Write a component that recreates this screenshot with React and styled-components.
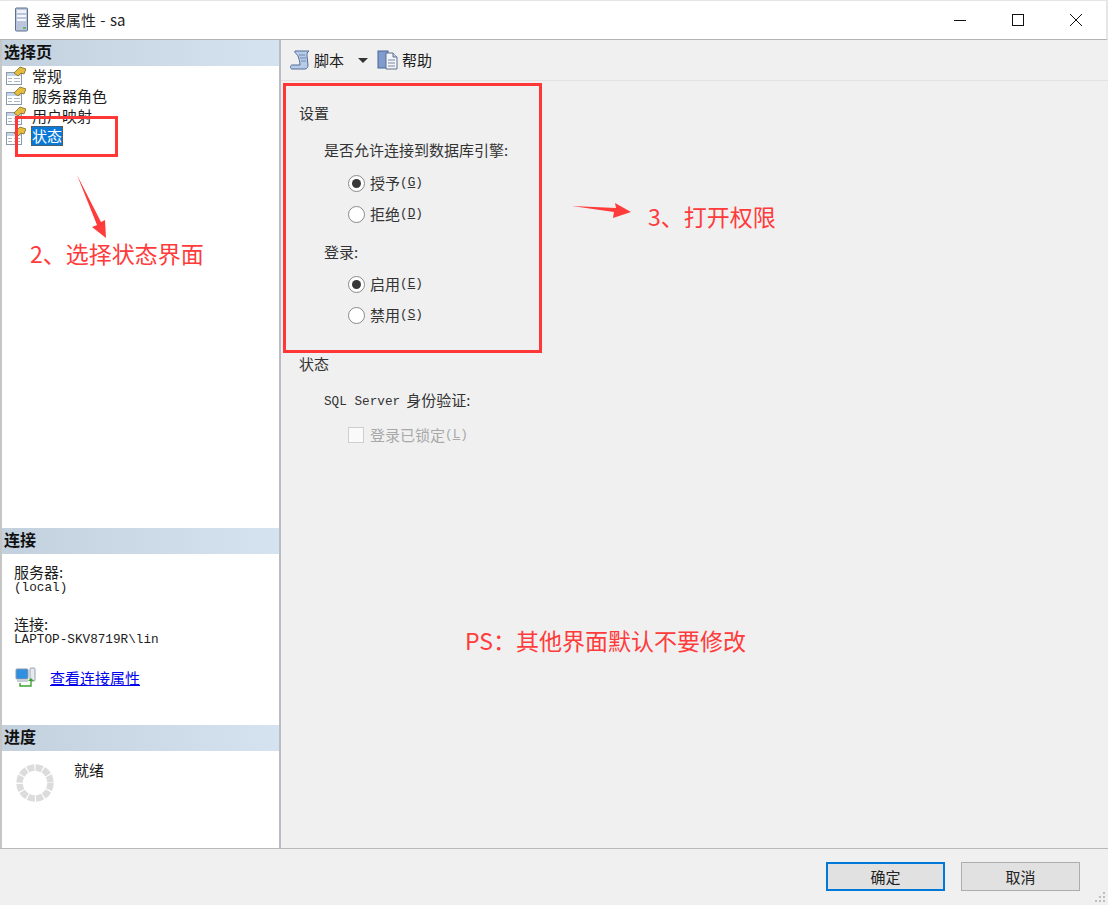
import React from 'react';
import styled, { createGlobalStyle } from 'styled-components';

const GlobalStyle = createGlobalStyle`
	html, body {
		margin: 0;
		padding: 0;
		background: #f0f0f0;
	}
	body {
		font-family: "Noto Sans CJK SC", "Liberation Sans", sans-serif;
		font-size: 15px;
		color: #1c1c1c;
	}
`;

const mono = `"Liberation Mono", "Noto Sans CJK SC", monospace`;

const Win = styled.div`
	position: relative;
	width: 1108px;
	height: 905px;
	overflow: hidden;
	display: flex;
	flex-direction: column;
	background: #f0f0f0;
`;

const TitleBar = styled.div`
	height: 38px;
	flex: none;
	display: flex;
	align-items: center;
	background: #fff;
	border-top: 1px solid #e6e6e6;
	border-right: 2px solid #e6e6e6;
	border-bottom: 1px solid #b4b4b4;
	padding: 0 1px 0 14px;
`;

const Title = styled.div`
	margin-left: 6px;
	flex: 1;
	line-height: 20px;
	word-spacing: 1px;
	color: #222;
`;

const WinButton = styled.div`
	width: 58px;
	height: 38px;
	display: flex;
	align-items: center;
	justify-content: center;
`;

const Main = styled.div`
	height: 809px;
	flex: none;
	display: flex;
	border-bottom: 1px solid #b9b9b9;
	box-sizing: border-box;
`;

const Sidebar = styled.div`
	width: 281px;
	flex: none;
	box-sizing: border-box;
	background: #fff;
	border-left: 2px solid #c6c6c6;
	border-right: 2px solid #b9bcc2;
	display: flex;
	flex-direction: column;
`;

const Section = styled.div`
	height: ${p => p.$h}px;
	flex: none;
	display: flex;
	flex-direction: column;
`;

const SectionHead = styled.div`
	height: 26px;
	flex: none;
	box-sizing: border-box;
	padding: 0 0 4px 2px;
	display: flex;
	align-items: center;
	font-weight: 700;
	font-size: 16px;
	color: #111;
	background: linear-gradient(90deg, #c3d1df 0%, #d5e2ef 100%);
`;

const Tree = styled.div`
	display: flex;
	flex-direction: column;
`;

const TreeRow = styled.div`
	height: 20px;
	display: flex;
	align-items: center;
	padding-left: 2px;
	line-height: 20px;
	gap: 6px;
`;

const TreeLabel = styled.span`
	box-sizing: border-box;
	height: 20px;
	line-height: 18px;
	${p => p.$selected
		? `background: #0a78d6; color: #fff; border: 1px dotted #7a4a10;`
		: `border: 1px solid transparent;`}
	margin-left: -1px;
`;

const ConnBody = styled.div`
	padding: 10px 0 0 12px;
	display: flex;
	flex-direction: column;
`;

const ConnLabel = styled.div`
	line-height: 16px;
	height: 16px;
`;

const ConnValue = styled.div`
	font-family: ${mono};
	font-size: 12.7px;
	line-height: 14px;
	height: 14px;
	margin-top: 1px;
	margin-bottom: ${p => p.$bottom}px;
`;

const LinkRow = styled.div`
	display: flex;
	align-items: center;
	gap: 13px;
	padding-left: 1px;
`;

const Link = styled.a`
	color: #0000ee;
	text-decoration: underline;
	line-height: 20px;
`;

const ProgressBody = styled.div`
	display: flex;
	padding: 12px 0 0 13px;
	gap: 19px;
`;

const ReadyText = styled.div`
	margin-top: -3px;
	line-height: 20px;
`;

const Content = styled.div`
	flex: 1;
	display: flex;
	flex-direction: column;
	background: #f0f0f0;
`;

const Toolbar = styled.div`
	height: 41px;
	flex: none;
	box-sizing: border-box;
	display: flex;
	align-items: center;
	padding-left: 8px;
	border-bottom: 1px solid #e2e2e2;
`;

const ToolButton = styled.div`
	display: flex;
	align-items: center;
	gap: 3px;
	line-height: 20px;
`;

const Caret = styled.span`
	width: 0;
	height: 0;
	margin: 0 9px 0 14px;
	border-left: 5px solid transparent;
	border-right: 5px solid transparent;
	border-top: 5px solid #333;
`;

const Form = styled.div`
	display: flex;
	flex-direction: column;
	padding-left: 18px;
`;

const Line = styled.div`
	display: flex;
	align-items: center;
	height: 20px;
	line-height: 20px;
	margin-top: ${p => p.$top}px;
	padding-left: ${p => p.$indent || 0}px;
	color: ${p => (p.$disabled ? '#a8a8a8' : '#333')};
`;

const MonoText = styled.span`
	font-family: ${mono};
	font-size: 12.7px;
	white-space: pre;
`;

const SqlText = styled(MonoText)`
	margin: 4px 6px 0 0;
`;

const Accel = styled.span`
	text-decoration: underline;
`;

const Radio = styled.span`
	width: 17px;
	height: 17px;
	box-sizing: border-box;
	flex: none;
	margin-right: 5px;
	border-radius: 50%;
	border: 1.5px solid #8a8a8a;
	background: #fff;
	display: flex;
	align-items: center;
	justify-content: center;
	&::after {
		content: '';
		display: ${p => (p.$checked ? 'block' : 'none')};
		width: 9px;
		height: 9px;
		border-radius: 50%;
		background: #383838;
	}
`;

const CheckBox = styled.span`
	width: 16px;
	height: 16px;
	box-sizing: border-box;
	flex: none;
	margin-right: 6px;
	border: 1px solid #cfcfcf;
	background: #fafafa;
`;

const Footer = styled.div`
	flex: 1;
	display: flex;
	justify-content: flex-end;
	align-items: flex-start;
	gap: 16px;
	padding: 13px 28px 0 0;
	position: relative;
`;

const Button = styled.div`
	width: 119px;
	height: 29px;
	box-sizing: border-box;
	display: flex;
	align-items: center;
	justify-content: center;
	padding-top: 1px;
	background: #e1e1e1;
	border: ${p => (p.$primary ? '2px solid #0078d7' : '1px solid #adadad')};
	line-height: 20px;
	color: #222;
`;

const Grip = styled.svg`
	position: absolute;
	right: 2px;
	bottom: 2px;
`;

const RedBox = styled.div`
	position: absolute;
	box-sizing: border-box;
	left: ${p => p.$x}px;
	top: ${p => p.$y}px;
	width: ${p => p.$w}px;
	height: ${p => p.$h}px;
	border: 3px solid #ff3737;
`;

const Note = styled.div`
	position: absolute;
	left: ${p => p.$x}px;
	top: ${p => p.$y}px;
	font-size: 23px;
	line-height: 30px;
	color: #ff3b3b;
	white-space: nowrap;
`;

const ArrowLayer = styled.svg`
	position: absolute;
	left: 0;
	top: 0;
	pointer-events: none;
`;

const ServerIcon = () => (
	<svg width="16" height="26" viewBox="0 0 16 26">
		<rect x="1.5" y="1" width="12" height="23" rx="1" fill="#b9c6dc" stroke="#5f6f8c" />
		<rect x="3" y="3" width="9" height="3" fill="#eef2f8" />
		<rect x="3" y="8" width="9" height="2" fill="#f4f7fb" />
		<rect x="3" y="12" width="9" height="2" fill="#f4f7fb" />
		<rect x="9" y="20" width="3" height="2" fill="#6fb26a" />
	</svg>
);

const PageIcon = () => (
	<svg width="22" height="20" viewBox="0 0 22 20">
		<rect x="2.5" y="6.5" width="15" height="12" fill="#fff" stroke="#8c99a8" />
		<rect x="3" y="7" width="14" height="3" fill="#c6d6e8" />
		<path d="M4 12.5h4M10 12.5h6M4 15.5h4M10 15.5h6" stroke="#a9b8c8" />
		<path d="M10 7l6-6 6 2-2 5-3-1-3 3z" fill="#e6bd3f" stroke="#7d6a2a" strokeWidth="0.8" />
	</svg>
);

const ScriptIcon = () => (
	<svg width="22" height="22" viewBox="0 0 22 22">
		<path d="M6 2h14c-2 1-2 3-2 5l1 9c0 2-1 4-3 4H3c-2 0-2-4 0-4h8c0-3-1-6-2-9C8 5 5 4 6 2z" fill="#b7cbe6" stroke="#4f6c96" />
		<path d="M10 6h6M11 9h6M12 12h5" stroke="#6f8ab0" />
	</svg>
);

const HelpIcon = () => (
	<svg width="22" height="22" viewBox="0 0 22 22">
		<rect x="1" y="2" width="10" height="17" fill="#7f9ccc" stroke="#4a6598" />
		<path d="M9 4h7l4 4v12H9z" fill="#f4f6fa" stroke="#5c6f8e" />
		<path d="M16 4v4h4" fill="#c9d5e6" stroke="#5c6f8e" />
		<path d="M11 11h7M11 14h7M11 17h7" stroke="#7487a3" />
	</svg>
);

const ConnIcon = () => (
	<svg width="22" height="21" viewBox="0 0 22 21">
		<rect x="1" y="2" width="12" height="10" rx="1" fill="#2f8fe0" stroke="#8a97a8" />
		<rect x="2" y="12" width="11" height="3" fill="#c8ced6" />
		<rect x="15" y="1" width="5" height="13" rx="1" fill="#e6e9ee" stroke="#9aa4b2" />
		<path d="M5 16v3h11v-5" fill="none" stroke="#3aa52f" strokeWidth="1.4" />
		<path d="M13 14h6l-3-3z" fill="#3aa52f" />
	</svg>
);

const Spinner = () => (
	<svg width="40" height="40" viewBox="0 0 40 40">
		<circle cx="20" cy="20" r="15.5" fill="none" stroke="#dcdcdc" strokeWidth="6.5" strokeDasharray="6.9 1.22" />
	</svg>
);

const pages = ['常规', '服务器角色', '用户映射', '状态'];

const AccelText = ({ letter }) => (
	<MonoText>(<Accel>{letter}</Accel>)</MonoText>
);

const RadioLine = ({ top, checked, label, accel }) => (
	<Line $top={top} $indent={49}>
		<Radio $checked={checked} />
		{label}<AccelText letter={accel} />
	</Line>
);

export default function App() {
	return (
		<Win>
			<GlobalStyle />
			<TitleBar>
				<ServerIcon />
				<Title>登录属性 - sa</Title>
				<WinButton>
					<svg width="12" height="12" viewBox="0 0 12 12"><path d="M0 6.5h12" stroke="#111" /></svg>
				</WinButton>
				<WinButton>
					<svg width="12" height="12" viewBox="0 0 12 12"><rect x="0.5" y="0.5" width="11" height="11" fill="none" stroke="#111" /></svg>
				</WinButton>
				<WinButton>
					<svg width="12" height="12" viewBox="0 0 12 12"><path d="M0 0l12 12M12 0L0 12" stroke="#111" /></svg>
				</WinButton>
			</TitleBar>

			<Main>
				<Sidebar>
					<Section $h={488}>
						<SectionHead>选择页</SectionHead>
						<Tree>
							{pages.map((p, i) => (
								<TreeRow key={p}>
									<PageIcon />
									<TreeLabel $selected={i === 3}>{p}</TreeLabel>
								</TreeRow>
							))}
						</Tree>
					</Section>
					<Section $h={197}>
						<SectionHead>连接</SectionHead>
						<ConnBody>
							<ConnLabel>服务器:</ConnLabel>
							<ConnValue $bottom={21}>(local)</ConnValue>
							<ConnLabel>连接:</ConnLabel>
							<ConnValue $bottom={20}>LAPTOP-SKV8719R\lin</ConnValue>
							<LinkRow>
								<ConnIcon />
								<Link>查看连接属性</Link>
							</LinkRow>
						</ConnBody>
					</Section>
					<Section $h={123}>
						<SectionHead>进度</SectionHead>
						<ProgressBody>
							<Spinner />
							<ReadyText>就绪</ReadyText>
						</ProgressBody>
					</Section>
				</Sidebar>

				<Content>
					<Toolbar>
						<ToolButton><ScriptIcon />脚本</ToolButton>
						<Caret />
						<ToolButton><HelpIcon />帮助</ToolButton>
					</Toolbar>
					<Form>
						<Line $top={22}>设置</Line>
						<Line $top={17} $indent={25}>是否允许连接到数据库引擎:</Line>
						<RadioLine top={13} checked label="授予" accel="G" />
						<RadioLine top={11} label="拒绝" accel="D" />
						<Line $top={18} $indent={25}>登录:</Line>
						<RadioLine top={12} checked label="启用" accel="E" />
						<RadioLine top={11} label="禁用" accel="S" />
						<Line $top={29}>状态</Line>
						<Line $top={16} $indent={25}><SqlText>SQL Server</SqlText>身份验证:</Line>
						<Line $top={15} $indent={49} $disabled>
							<CheckBox />登录已锁定<AccelText letter="L" />
						</Line>
					</Form>
				</Content>
			</Main>

			<Footer>
				<Button $primary>确定</Button>
				<Button>取消</Button>
				<Grip width="12" height="12" viewBox="0 0 12 12">
					<path d="M9 1h2v2H9zM5 5h2v2H5zM9 5h2v2H9zM1 9h2v2H1zM5 9h2v2H5zM9 9h2v2H9z" fill="#bdbdbd" />
				</Grip>
			</Footer>

			{/* annotations drawn over the screenshot */}
			<RedBox $x={15} $y={116} $w={103} $h={41} />
			<RedBox $x={283} $y={83} $w={259} $h={270} />
			<ArrowLayer width="1108" height="905" viewBox="0 0 1108 905">
				<polygon points="77,175 101,222 105,220 106,238 92,227 97,225" fill="#ff3b3b" />
				<polygon points="572,206 616,208 615,203 631,212 613,218 614,212" fill="#ff3b3b" />
			</ArrowLayer>
			<Note $x={30} $y={238}>2、选择状态界面</Note>
			<Note $x={648} $y={201}>3、打开权限</Note>
			<Note $x={465} $y={625}>PS：其他界面默认不要修改</Note>
		</Win>
	);
}
